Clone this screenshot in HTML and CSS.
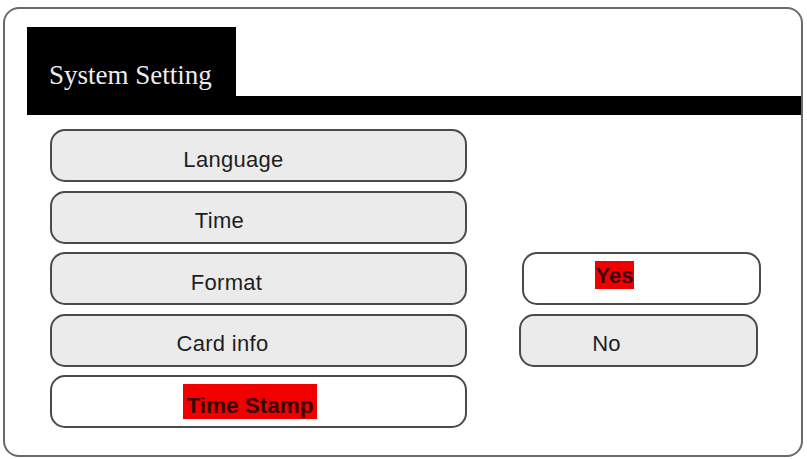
FILE: index.html
```html
<!DOCTYPE html>
<html>
<head>
<meta charset="utf-8">
<link rel="stylesheet" href="styles.css">
</head>
<body>
<div class="frame">
  <div class="header">
    <div class="tab">System Setting</div>
    <div class="bar"></div>
  </div>
  <div class="menu">
    <div class="btn r1 c1 t-language"><span>Language</span></div>
    <div class="btn r2 c1 t-time"><span>Time</span></div>
    <div class="btn r3 c1 t-format"><span>Format</span></div>
    <div class="btn r4 c1 t-card"><span>Card info</span></div>
    <div class="btn r5 c1 btn-white t-stamp"><span class="hl hl-stamp">Time Stamp</span></div>
    <div class="btn r3 c2 btn-white t-yes"><span class="hl hl-yes">Yes</span></div>
    <div class="btn r4 c2 t-no"><span>No</span></div>
  </div>
</div>
</body>
</html>
```

FILE: styles.css
```css
html, body {
  margin: 0;
  padding: 0;
  background: #ffffff;
}
.frame {
  box-sizing: border-box;
  width: 800px;
  height: 450px;
  margin: 7px 0 0 3px;
  border: 2px solid #6a6a6a;
  border-radius: 16px;
  background: #ffffff;
  overflow: hidden;
}
.header {
  display: flex;
  align-items: flex-end;
  margin: 18px 0 0 22px;
  height: 88px;
}
.tab {
  box-sizing: border-box;
  width: 209px;
  height: 88px;
  background: #000;
  color: #ececec;
  font-family: "Liberation Serif", "Times New Roman", serif;
  font-size: 27px;
  line-height: 31px;
  display: flex;
  align-items: flex-end;
  padding: 0 0 24px 22px;
  white-space: nowrap;
}
.bar {
  flex: 1;
  height: 19px;
  background: #000;
}
.menu {
  display: grid;
  grid-template-columns: 417px 239px;
  grid-template-rows: repeat(5, 53px);
  column-gap: 53px;
  row-gap: 8.5px;
  margin: 14px 0 0 45px;
}
.r1 { grid-row: 1; }
.r2 { grid-row: 2; }
.r3 { grid-row: 3; }
.r4 { grid-row: 4; }
.r5 { grid-row: 5; }
.c1 { grid-column: 1; }
.c2 { grid-column: 2; }
.btn {
  box-sizing: border-box;
  border: 2px solid #4a4a4a;
  border-radius: 15px;
  background: #ebebeb;
  display: flex;
  align-items: center;
  justify-content: center;
  padding-top: 8px;
  font-family: "Liberation Sans", Arial, sans-serif;
  font-size: 22px;
  letter-spacing: 0.3px;
  color: #1e1e1e;
  white-space: nowrap;
}
.btn-white { background: #ffffff; }
.t-language { padding-right: 50px; }
.t-time { padding-right: 78px; }
.t-format { padding-right: 64px; }
.t-card { padding-right: 72px; }
.t-stamp { padding-right: 17px; }
.t-yes { padding-right: 54px; margin-left: 2px; margin-right: -2px; padding-top: 0; }
.t-no { padding-right: 64px; margin-left: -1px; margin-right: 1px; }
.hl {
  background: #f20000;
  color: #3a0606;
  font-weight: bold;
  letter-spacing: 0;
}
.hl-stamp {
  padding: 9px 3px 0 3px;
  margin-top: -8px;
  font-size: 22.5px;
}
.hl-yes {
  padding: 2px 1px 0 1px;
  margin-bottom: 7px;
}
```
